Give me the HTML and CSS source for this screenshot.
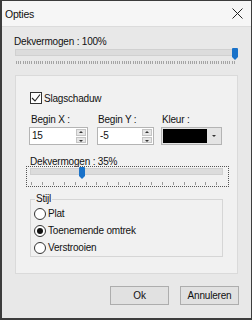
FILE: index.html
```html
<!DOCTYPE html>
<html>
<head>
  <title>Opties</title>
  <link rel="stylesheet" href="styles.css">
</head>
<body>
  <div class="window">
    <div class="titlebar">
      <span class="title">Opties</span>
      <svg class="close" width="11" height="11" viewBox="0 0 11 11"><path d="M0.5 0.5L10.5 10.5M10.5 0.5L0.5 10.5" stroke="#222" stroke-width="1"/></svg>
    </div>

    <div class="content">
      <div class="label top-label">Dekvermogen : 100%</div>
      <div class="slider wide">
        <div class="track"></div>
        <div class="thumb" style="left: 217px;"></div>
        <div class="ticks dense"></div>
      </div>

      <div class="panel">
        <div class="check">
          <span class="box"><svg width="10" height="10" viewBox="0 0 10 10"><path d="M1 5L4 8L9 1.5" fill="none" stroke="#222" stroke-width="1.1"/></svg></span>
          <span>Slagschaduw</span>
        </div>

        <div class="fields">
          <div class="field f1">
            <div class="label">Begin X :</div>
            <div class="spin">
              <span class="val">15</span>
              <span class="arrows"><span class="up"></span><span class="down"></span></span>
            </div>
          </div>
          <div class="field f2">
            <div class="label">Begin Y :</div>
            <div class="spin">
              <span class="val">-5</span>
              <span class="arrows"><span class="up"></span><span class="down"></span></span>
            </div>
          </div>
          <div class="field f3">
            <div class="label">Kleur :</div>
            <div class="combo">
              <span class="swatch"></span>
              <span class="drop"></span>
            </div>
          </div>
        </div>

        <div class="label sub">Dekvermogen : 35%</div>
        <div class="slider focus">
          <div class="track"></div>
          <div class="thumb" style="left: 52px;"></div>
          <div class="ticks sparse"></div>
        </div>

        <fieldset class="group">
          <legend>Stijl</legend>
          <div class="radio"><span class="circle"></span>Plat</div>
          <div class="radio"><span class="circle on"></span>Toenemende omtrek</div>
          <div class="radio"><span class="circle"></span>Verstrooien</div>
        </fieldset>
      </div>

      <div class="buttons">
        <button>Ok</button>
        <button>Annuleren</button>
      </div>
    </div>
  </div>
</body>
</html>
```

FILE: styles.css
```css
body {
  margin: 0;
  font-family: "Liberation Sans", Arial, sans-serif;
  font-size: 10px;
  letter-spacing: -0.2px;
  color: #111;
}
.window {
  width: 252px;
  height: 320px;
  box-sizing: border-box;
  border: 1px solid #3c3c3c;
  border-left-width: 2px;
  border-bottom-width: 2px;
  background: #e8e8e8;
  display: flex;
  flex-direction: column;
}
.titlebar {
  height: 25px;
  background: #f6f6f6;
  border-bottom: 1px solid #dcdcdc;
  display: flex;
  align-items: center;
  justify-content: space-between;
  padding: 0 8px 0 3px;
}
.title {
  font-size: 10.5px;
}
.content {
  padding: 0 12px;
  display: flex;
  flex-direction: column;
}
.label {
  line-height: 12px;
}
.top-label {
  margin-top: 9px;
}
.slider {
  position: relative;
}
.wide {
  margin: 1px 0 0 1px;
  width: 222px;
}
.track {
  height: 5px;
  background: #dcdcdc;
  border: 1px solid #d0d0d0;
}
.thumb {
  position: absolute;
  top: -1px;
  width: 6px;
  height: 9px;
  background: #1a72c9;
  border-radius: 1px 1px 0 0;
}
.thumb::after {
  content: "";
  position: absolute;
  top: 9px;
  left: 0;
  border-left: 3px solid transparent;
  border-right: 3px solid transparent;
  border-top: 3px solid #1a72c9;
}
.ticks {
  height: 3px;
  margin: 5px 1px 0 1px;
}
.dense {
  background: repeating-linear-gradient(to right, #a4a4a4 0 1px, transparent 1px 2.2px);
}
.sparse {
  margin-top: 7px;
  background: repeating-linear-gradient(to right, #9c9c9c 0 1px, transparent 1px 10.9px);
}
.panel {
  margin: 11px 0 0 1px;
  width: 223px;
  height: 199px;
  box-sizing: border-box;
  background: #f1f1f1;
  border: 1px solid #dadada;
  padding: 16px 14px 0 14px;
}
.check {
  display: flex;
  align-items: center;
  gap: 2px;
  height: 12px;
}
.box {
  width: 10px;
  height: 10px;
  border: 1px solid #333;
  background: #fff;
  display: flex;
}
.fields {
  display: flex;
  margin: 10px 0 0 -1px;
}
.field .label {
  padding-left: 1px;
}
.f1 {
  width: 59px;
  margin-right: 9px;
}
.f1 .label {
  padding-left: 2px;
}
.f2 {
  width: 57px;
  margin-right: 7px;
}
.f3 {
  width: 61px;
}
.spin {
  margin-top: 1px;
  height: 18px;
  box-sizing: border-box;
  border: 1px solid #b4b4b4;
  background: #fff;
  display: flex;
  justify-content: space-between;
}
.val {
  padding: 2px 0 0 2px;
}
.arrows {
  width: 10px;
  display: flex;
  flex-direction: column;
  gap: 1px;
  padding: 1px;
}
.arrows span {
  flex: 1;
  background: #e6e6e6;
  border: 1px solid #c4c4c4;
  position: relative;
}
.up::after, .down::after {
  content: "";
  position: absolute;
  left: 2px;
  top: 2px;
  border-left: 2px solid transparent;
  border-right: 2px solid transparent;
}
.up::after {
  top: 1px;
  border-bottom: 2px solid #333;
}
.down::after {
  top: 2px;
  border-top: 2px solid #333;
}
.combo {
  margin-top: 1px;
  height: 18px;
  box-sizing: border-box;
  border: 1px solid #b4b4b4;
  background: #e4e4e4;
  display: flex;
  padding: 1px;
  gap: 1px;
}
.swatch {
  flex: 1;
  background: #000;
}
.drop {
  width: 12px;
  position: relative;
}
.drop::after {
  content: "";
  position: absolute;
  left: 4px;
  top: 6px;
  border-left: 2px solid transparent;
  border-right: 2px solid transparent;
  border-top: 2px solid #333;
}
.sub {
  margin-top: 11px;
  margin-bottom: -2px;
}
.focus {
  margin-left: -4px;
  width: 203px;
  height: 21px;
  box-sizing: border-box;
  border: 1px dotted #555;
  padding: 1px 5px 0 3px;
}
.focus .thumb {
  top: 0;
}
.group {
  margin: 6px 0 0 0;
  width: 193px;
  box-sizing: border-box;
  border: 1px solid #d6d6d6;
  padding: 0 3px;
  min-width: 0;
}
.group legend {
  padding: 0 1px;
  margin-left: 1px;
  line-height: 12px;
}
.radio {
  display: flex;
  align-items: center;
  gap: 2px;
  height: 17px;
}
.circle {
  width: 10px;
  height: 10px;
  border: 1px solid #333;
  border-radius: 50%;
  background: #fff;
  position: relative;
}
.circle.on::after {
  content: "";
  position: absolute;
  left: 2px;
  top: 2px;
  width: 6px;
  height: 6px;
  border-radius: 50%;
  background: #111;
}
.buttons {
  display: flex;
  justify-content: flex-end;
  gap: 11px;
  margin-top: 12px;
}
button {
  width: 59px;
  height: 19px;
  font-family: inherit;
  font-size: 10px;
  letter-spacing: -0.2px;
  background: #e1e1e1;
  border: 1px solid #adadad;
  padding: 0;
  color: #111;
}
```
